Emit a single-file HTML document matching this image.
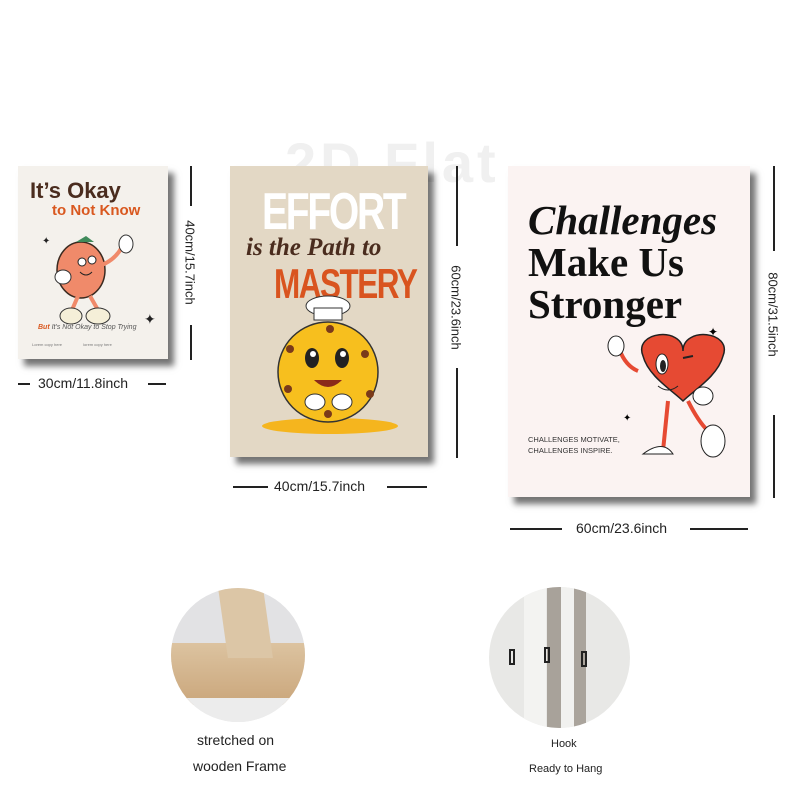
<!DOCTYPE html>
<html><head><meta charset="utf-8"><style>
*{margin:0;padding:0;box-sizing:border-box}
body{width:800px;height:800px;background:#fff;position:relative;overflow:hidden;font-family:"Liberation Sans",sans-serif}
.a{position:absolute}
.p{position:absolute;box-shadow:6px 7px 6px rgba(0,0,0,.55)}
.lbl{position:absolute;font-size:13px;color:#222;white-space:nowrap}
.hl{position:absolute;height:2px;background:#222}
.vl{position:absolute;width:2px;background:#222}
.v{position:absolute;font-size:13px;color:#222;white-space:nowrap;transform:rotate(90deg);transform-origin:center}
</style></head><body>
<div class="a" style="left:285px;top:130px;font-size:56px;color:#f0f0f0;font-weight:bold;letter-spacing:4px">2D Flat</div>

<!-- poster 1 -->
<div class="p" style="left:18px;top:166px;width:150px;height:193px;background:#f4f1ec">
 <div class="a" style="left:12px;top:12px;font-size:22px;font-weight:bold;color:#4a2c1e">It’s Okay</div>
 <div class="a" style="left:34px;top:36px;font-size:15px;font-weight:bold;color:#d9581f">to Not Know</div>
 <svg class="a" style="left:18px;top:66px" width="120" height="110">
  <ellipse cx="45" cy="38" rx="24" ry="28" fill="#f08a6a" stroke="#3a2a20" stroke-width="1.5"/>
  <path d="M40 10 l10 -6 l8 6 z" fill="#3f8a5a"/>
  <circle cx="46" cy="30" r="4" fill="#fff" stroke="#222"/><circle cx="56" cy="28" r="4" fill="#fff" stroke="#222"/>
  <path d="M44 40 q6 6 12 0" stroke="#222" fill="none"/>
  <path d="M60 35 q18 -5 26 -20" stroke="#f08a6a" stroke-width="4" fill="none"/>
  <ellipse cx="90" cy="12" rx="7" ry="9" fill="#fff" stroke="#333"/>
  <ellipse cx="27" cy="45" rx="8" ry="7" fill="#fff" stroke="#333"/>
  <path d="M42 64 l-6 14 M54 64 l8 14" stroke="#f08a6a" stroke-width="4"/>
  <ellipse cx="35" cy="84" rx="11" ry="8" fill="#f5efd8" stroke="#333"/>
  <ellipse cx="62" cy="84" rx="12" ry="8" fill="#f5efd8" stroke="#333"/>
  <text x="108" y="92" font-size="14" fill="#222">✦</text><text x="6" y="12" font-size="10" fill="#222">✦</text>
 </svg>
 <div class="a" style="left:20px;top:158px;font-size:7px;font-style:italic;color:#555"><b style="color:#d9581f">But</b> It's Not Okay to Stop Trying</div>
 <div class="a" style="left:14px;top:176px;font-size:4px;color:#777">Lorem copy here &nbsp;&nbsp;&nbsp;&nbsp;&nbsp;&nbsp;&nbsp;&nbsp;&nbsp;&nbsp;&nbsp;&nbsp;&nbsp;&nbsp;&nbsp;&nbsp;&nbsp; lorem copy here</div>
</div>
<div class="vl" style="left:190px;top:166px;height:40px"></div>
<div class="vl" style="left:190px;top:325px;height:35px"></div>
<div class="v" style="left:135px;top:255px;width:110px;text-align:center">40cm/15.7inch</div>
<div class="hl" style="left:18px;top:383px;width:12px"></div>
<div class="hl" style="left:148px;top:383px;width:18px"></div>
<div class="lbl" style="left:38px;top:375px;font-size:14px">30cm/11.8inch</div>

<!-- poster 2 -->
<div class="p" style="left:230px;top:166px;width:198px;height:291px;background:#e3d8c5">
 <div class="a" style="left:32px;top:16px;font-size:52px;font-weight:bold;color:#fff;letter-spacing:-3px;transform:scaleX(.75);transform-origin:left">EFFORT</div>
 <div class="a" style="left:16px;top:68px;font-size:25px;font-style:italic;font-weight:bold;color:#4a2c1e;font-family:'Liberation Serif',serif">is the Path to</div>
 <div class="a" style="left:44px;top:94px;font-size:42px;font-weight:bold;color:#d9541f;letter-spacing:-2px;transform:scaleX(.75);transform-origin:left">MASTERY</div>
 <svg class="a" style="left:30px;top:128px" width="140" height="145">
  <ellipse cx="68" cy="12" rx="22" ry="10" fill="#fff" stroke="#333"/>
  <rect x="54" y="14" width="28" height="12" fill="#fff" stroke="#333"/>
  <ellipse cx="70" cy="132" rx="68" ry="8" fill="#f5b51e"/>
  <circle cx="68" cy="78" r="50" fill="#f7bf1e" stroke="#333" stroke-width="1.5"/>
  <ellipse cx="52" cy="64" rx="7" ry="10" fill="#222"/><ellipse cx="82" cy="64" rx="7" ry="10" fill="#222"/>
  <circle cx="53" cy="60" r="3" fill="#fff"/><circle cx="83" cy="60" r="3" fill="#fff"/>
  <path d="M54 86 q14 14 28 0 z" fill="#8a2a1a"/>
  <circle cx="30" cy="55" r="4" fill="#7a3a1a"/><circle cx="105" cy="60" r="4" fill="#7a3a1a"/><circle cx="28" cy="95" r="4" fill="#7a3a1a"/><circle cx="110" cy="100" r="4" fill="#7a3a1a"/><circle cx="68" cy="120" r="4" fill="#7a3a1a"/><circle cx="70" cy="35" r="4" fill="#7a3a1a"/>
  <ellipse cx="55" cy="108" rx="10" ry="8" fill="#fff" stroke="#333"/><ellipse cx="82" cy="108" rx="10" ry="8" fill="#fff" stroke="#333"/>
 </svg>
</div>
<div class="vl" style="left:456px;top:166px;height:80px"></div>
<div class="vl" style="left:456px;top:368px;height:90px"></div>
<div class="v" style="left:401px;top:300px;width:110px;text-align:center">60cm/23.6inch</div>
<div class="hl" style="left:233px;top:486px;width:35px"></div>
<div class="hl" style="left:387px;top:486px;width:40px"></div>
<div class="lbl" style="left:274px;top:478px;font-size:14px">40cm/15.7inch</div>

<!-- poster 3 -->
<div class="p" style="left:508px;top:166px;width:242px;height:331px;background:#fbf3f2">
 <div class="a" style="left:20px;top:30px;font-size:41px;font-style:italic;font-weight:bold;color:#111;font-family:'Liberation Serif',serif">Challenges</div>
 <div class="a" style="left:20px;top:75px;font-size:41px;font-weight:bold;color:#111;font-family:'Liberation Serif',serif;line-height:42px">Make Us<br>Stronger</div>
 <svg class="a" style="left:90px;top:160px" width="140" height="150">
  <path d="M45 30 c-10 -25 40 -30 40 -5 c0 -25 50 -20 40 5 c-5 20 -30 35 -40 45 c-10 -10 -35 -25 -40 -45z" fill="#e64a33" stroke="#222" stroke-width="1.5"/>
  <ellipse cx="64" cy="38" rx="6" ry="10" fill="#fff" stroke="#222"/><ellipse cx="65" cy="40" rx="3" ry="6" fill="#222"/>
  <path d="M85 32 l10 -2" stroke="#222" stroke-width="2"/>
  <path d="M60 60 q10 8 20 0" stroke="#222" fill="none"/>
  <path d="M40 45 q-12 -5 -18 -20" stroke="#e64a33" stroke-width="4" fill="none"/>
  <ellipse cx="18" cy="20" rx="8" ry="10" fill="#fff" stroke="#222"/>
  <path d="M70 75 l-5 50 M90 75 q10 20 20 30" stroke="#e64a33" stroke-width="4" fill="none"/>
  <path d="M45 128 q20 -15 30 0 z" fill="#fff" stroke="#222"/>
  <ellipse cx="115" cy="115" rx="12" ry="16" fill="#fff" stroke="#222"/>
  <ellipse cx="105" cy="70" rx="10" ry="9" fill="#fff" stroke="#222"/>
  <text x="110" y="10" font-size="12">✦</text><text x="25" y="95" font-size="10">✦</text>
 </svg>
 <div class="a" style="left:20px;top:268px;font-size:7.5px;color:#333;line-height:11px">CHALLENGES MOTIVATE,<br>CHALLENGES INSPIRE.</div>
</div>
<div class="vl" style="left:773px;top:166px;height:85px"></div>
<div class="vl" style="left:773px;top:415px;height:83px"></div>
<div class="v" style="left:718px;top:307px;width:110px;text-align:center">80cm/31.5inch</div>
<div class="hl" style="left:510px;top:528px;width:52px"></div>
<div class="hl" style="left:690px;top:528px;width:58px"></div>
<div class="lbl" style="left:576px;top:520px;font-size:14px">60cm/23.6inch</div>

<!-- circles -->
<div class="a" style="left:171px;top:588px;width:134px;height:134px;border-radius:50%;overflow:hidden;background:#e2e2e4">
 <div class="a" style="left:0;top:55px;width:134px;height:62px;background:linear-gradient(#dcc3a0,#caa67b)"></div>
 <div class="a" style="left:52px;top:0;width:45px;height:70px;background:#dcc6a6;transform:skewX(8deg)"></div>
 <div class="a" style="left:0;top:110px;width:134px;height:30px;background:#ececec"></div>
</div>
<div class="a" style="left:489px;top:587px;width:141px;height:141px;border-radius:50%;overflow:hidden;background:#e8e8e6">
 <div class="a" style="left:58px;top:0;width:14px;height:141px;background:#a8a29a"></div>
 <div class="a" style="left:85px;top:0;width:12px;height:141px;background:#aaa49c"></div>
 <div class="a" style="left:35px;top:0;width:22px;height:141px;background:#f3f3f1"></div>
 <div class="a" style="left:72px;top:0;width:13px;height:141px;background:#f1f1ef"></div>
 <div class="a" style="left:20px;top:62px;width:6px;height:16px;border:2px solid #222"></div>
 <div class="a" style="left:55px;top:60px;width:6px;height:16px;border:2px solid #222"></div>
 <div class="a" style="left:92px;top:64px;width:6px;height:16px;border:2px solid #222"></div>
</div>
<div class="lbl" style="left:197px;top:732px;font-size:14px">stretched on</div>
<div class="lbl" style="left:193px;top:758px;font-size:14px">wooden Frame</div>
<div class="lbl" style="left:551px;top:738px;font-size:11px">Hook</div>
<div class="lbl" style="left:529px;top:763px;font-size:11px">Ready to Hang</div>
</body></html>
